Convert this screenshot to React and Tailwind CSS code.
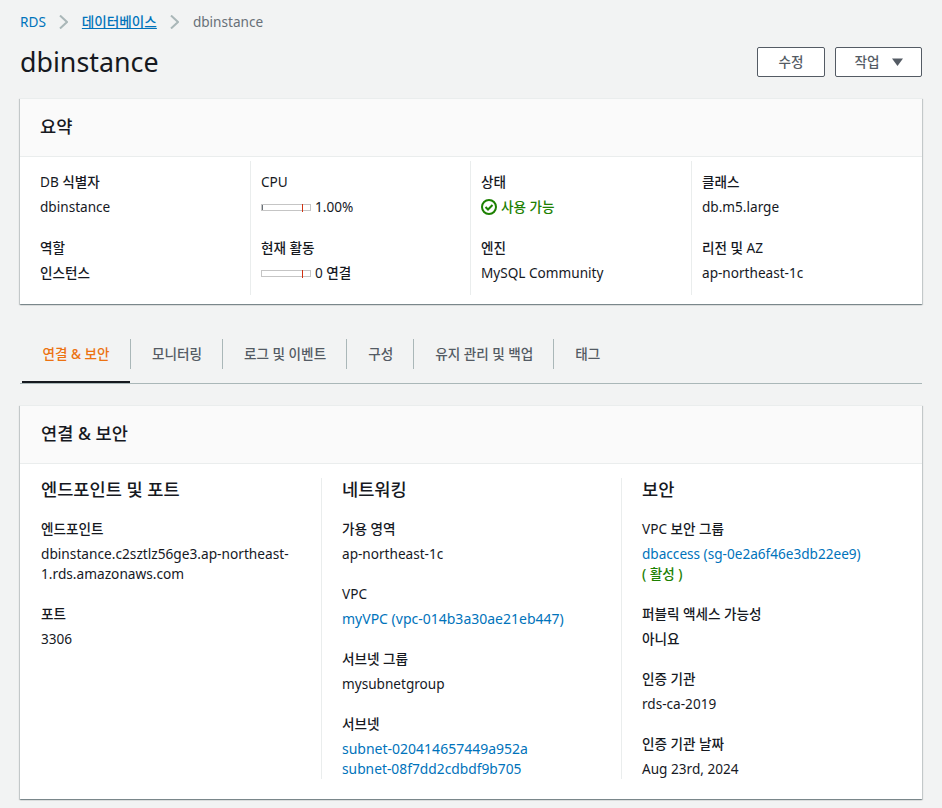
import React from 'react';

const FONT = 'font-["Noto_Sans","Noto_Sans_CJK_KR",sans-serif]';
const CARD_SHADOW = 'shadow-[0_1px_1px_0_rgba(0,28,36,0.3),1px_1px_1px_0_rgba(0,28,36,0.15),-1px_1px_1px_0_rgba(0,28,36,0.15)]';

const Link = ({ children, className = '' }) => <a className={`text-[#0073bb] ${className}`}>{children}</a>;

// korean runs come out heavier than latin in the reference
const K = ({ children }) => <span className="font-medium">{children}</span>;

const Chevron = () => (
  <svg width="9" height="14" viewBox="0 0 9 14" fill="none" stroke="#aab7b8" strokeWidth="2" className="mx-[13.5px]">
    <path d="M1 0.5L8 7L1 13.5" />
  </svg>
);

// small usage bar with the red marker near the right end
const Meter = ({ fill }) => (
  <span className="relative inline-block w-[50px] h-[7px] border border-[#c5c5c5] bg-white mr-[4px]">
    {fill && <span className="absolute left-0 top-0 h-full w-px bg-[#687078]" />}
    <span className="absolute left-[40px] top-[-1px] h-[8px] w-px bg-[#d13212]" />
  </span>
);

const SummaryCell = ({ label, children }) => (
  <div className="h-[66px]">
    <div className="text-[#16191f] leading-[22px]">{label}</div>
    <div className="mt-[3px] leading-[22px] text-[#16191f] flex items-center">{children}</div>
  </div>
);

const Field = ({ label, children }) => (
  <div className="mb-[20px] last:mb-0">
    <div className="text-[#16191f] leading-[20px]">{label}</div>
    <div className="mt-[5px] leading-[20px] text-[#16191f]">{children}</div>
  </div>
);

const tabs = ['모니터링', '로그 및 이벤트', '구성', '유지 관리 및 백업', '태그'];

export default function App() {
  return (
    <div className={`${FONT} bg-[#f2f3f3] min-h-[808px] w-[942px] px-5 pt-[11px] text-[13.6px] overflow-hidden`}>
      {/* breadcrumb */}
      <div className="flex items-center h-[22px] leading-[22px]">
        <Link>RDS</Link>
        <Chevron />
        <a className="text-[#0073bb] font-medium underline">데이터베이스</a>
        <Chevron />
        <span className="text-[#687078]">dbinstance</span>
      </div>

      {/* title row */}
      <div className="flex items-center justify-between mt-[14px] h-[30px]">
        <h1 className="text-[26.8px] leading-[28px] text-[#16191f]">dbinstance</h1>
        <div className="flex gap-[10px]">
          <button className="w-[68px] h-[30px] bg-white border border-[#545b64] rounded-[2px] text-[#545b64] font-medium flex items-center justify-center">수정</button>
          <button className="w-[87px] h-[30px] bg-white border border-[#545b64] rounded-[2px] text-[#545b64] font-medium flex items-center justify-center gap-[12px]">
            작업
            <svg width="11" height="8" viewBox="0 0 11 8"><path d="M0 0.5h11L5.5 8z" fill="#545b64" /></svg>
          </button>
        </div>
      </div>

      {/* summary */}
      <section className={`mt-[21px] bg-white border-t border-[#eaeded] ${CARD_SHADOW}`}>
        <div className="h-[58px] bg-[#fafafa] border-b border-[#eaeded] px-5 pb-[2px] flex items-center">
          <h2 className="text-[17.6px] font-medium text-[#16191f]">요약</h2>
        </div>
        <div className="flex pl-5 pt-[4px] pb-[9px] h-[147px]">
          <div className="w-[210px] pt-[10px]">
            <SummaryCell label={<>DB <K>식별자</K></>}>dbinstance</SummaryCell>
            <SummaryCell label={<K>역할</K>}><K>인스턴스</K></SummaryCell>
          </div>
          <div className="w-[220px] pl-[10px] pt-[10px] border-l border-[#eaeded]">
            <SummaryCell label="CPU"><Meter fill /><span>1.00%</span></SummaryCell>
            <SummaryCell label={<K>현재 활동</K>}><Meter /><span>0 <K>연결</K></span></SummaryCell>
          </div>
          <div className="w-[221px] pl-[10px] pt-[10px] border-l border-[#eaeded]">
            <SummaryCell label={<K>상태</K>}>
              <span className="flex items-center text-[#1d8102] font-medium">
                <svg width="16" height="16" viewBox="0 0 16 16" fill="none" stroke="#1d8102" strokeWidth="2" className="mr-[4px]">
                  <circle cx="8" cy="8" r="7" />
                  <path d="M4.5 8l2.5 2.5 4.5-4.5" />
                </svg>
                사용 가능
              </span>
            </SummaryCell>
            <SummaryCell label={<K>엔진</K>}>MySQL Community</SummaryCell>
          </div>
          <div className="flex-1 pl-[10px] pt-[10px] border-l border-[#eaeded]">
            <SummaryCell label={<K>클래스</K>}>db.m5.large</SummaryCell>
            <SummaryCell label={<><K>리전 및</K> AZ</>}>ap-northeast-1c</SummaryCell>
          </div>
        </div>
      </section>

      {/* tabs */}
      <div className="mt-[35px] flex h-[45px] border-b border-[#aab7b8] items-start">
        <div className="ml-[2px] w-[108px] h-[44px] border-b-[2px] border-[#16191f] -mb-px">
          <div className="h-[30px] flex items-center justify-center text-[#ec7211] font-medium">연결 &amp; 보안</div>
        </div>
        {tabs.map((t) => (
          <div key={t} className="pl-[21px] pr-[20px] h-[30px] border-l border-[#aab7b8] flex items-center text-[#545b64] font-medium">{t}</div>
        ))}
      </div>

      {/* connectivity */}
      <section className={`mt-[21px] bg-white border-t border-[#eaeded] ${CARD_SHADOW}`}>
        <div className="h-[58px] bg-[#fafafa] border-b border-[#eaeded] px-[21px] pb-[2px] flex items-center">
          <h2 className="text-[17.6px] font-medium text-[#16191f]">연결 &amp; 보안</h2>
        </div>
        <div className="flex pt-[14px] pb-[20px]">
          <div className="w-[301px] px-[21px]">
            <h3 className="text-[17.6px] leading-[22px] font-medium text-[#16191f] mb-[19px]">엔드포인트 및 포트</h3>
            <Field label={<K>엔드포인트</K>}>
              <span className="text-[13.7px]">dbinstance.c2sztlz56ge3.ap-northeast-<br />1.rds.amazonaws.com</span>
            </Field>
            <Field label={<K>포트</K>}>3306</Field>
          </div>
          <div className="w-[300px] px-5 border-l border-[#eaeded]">
            <h3 className="text-[17.6px] leading-[22px] font-medium text-[#16191f] mb-[19px]">네트워킹</h3>
            <Field label={<K>가용 영역</K>}>ap-northeast-1c</Field>
            <Field label="VPC"><Link className="text-[14px]">myVPC (vpc-014b3a30ae21eb447)</Link></Field>
            <Field label={<K>서브넷 그룹</K>}>mysubnetgroup</Field>
            <Field label={<K>서브넷</K>}>
              <div><Link className="text-[14px]">subnet-020414657449a952a</Link></div>
              <div><Link className="text-[13.8px]">subnet-08f7dd2cdbdf9b705</Link></div>
            </Field>
          </div>
          <div className="flex-1 px-5 border-l border-[#eaeded]">
            <h3 className="text-[17.6px] leading-[22px] font-medium text-[#16191f] mb-[19px]">보안</h3>
            <Field label={<>VPC <K>보안 그룹</K></>}>
              <Link>dbaccess (sg-0e2a6f46e3db22ee9)</Link>
              <div className="text-[#1d8102] font-medium">( 활성 )</div>
            </Field>
            <Field label={<K>퍼블릭 액세스 가능성</K>}><K>아니요</K></Field>
            <Field label={<K>인증 기관</K>}>rds-ca-2019</Field>
            <Field label={<K>인증 기관 날짜</K>}>Aug 23rd, 2024</Field>
          </div>
        </div>
      </section>
    </div>
  );
}
